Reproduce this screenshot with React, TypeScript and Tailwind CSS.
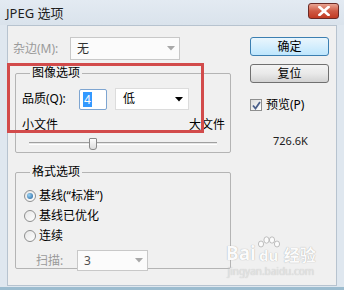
import React from "react";

const F = { fontFamily: '"Noto Sans", "Noto Sans CJK SC", sans-serif' };

function Arrow({ color = "#000" }: { color?: string }) {
  return (
    <svg width="8" height="5" viewBox="0 0 8 5">
      <path d="M0 0 L8 0 L4 4.5 Z" fill={color} />
    </svg>
  );
}

function Radio({ checked }: { checked?: boolean }) {
  return (
    <div className="w-[12px] h-[12px] rounded-full border border-[#8e8f8f] bg-gradient-to-br from-[#e6e6e6] to-[#ffffff] flex items-center justify-center shrink-0">
      {checked && (
        <div className="w-[6px] h-[6px] rounded-full bg-[radial-gradient(circle_at_35%_35%,#9ad3f5,#1f5f9a)]" />
      )}
    </div>
  );
}

export default function App() {
  return (
    <div className="relative w-[344px] h-[290px] overflow-hidden bg-[#dfe7ef] text-[12px] text-black" style={F}>
      {/* title bar */}
      <div className="h-[25px] flex items-center justify-between bg-gradient-to-b from-[#e3eaf2] to-[#dae3ec]">
        <div className="pl-[6px] text-[13px] text-[#1e1e1e] leading-none pt-[1px]">JPEG 选项</div>
        <div className="mr-[5px] mt-[-4px] w-[31px] h-[16px] rounded-[3px] border border-[#6b2a25] bg-gradient-to-b from-[#e8a493] via-[#cf5a44] to-[#c23a22] flex items-center justify-center">
          <svg width="12" height="10" viewBox="0 0 12 10">
            <path d="M1.5 1 L10.5 9 M10.5 1 L1.5 9" stroke="#fff" strokeWidth="2.6" strokeLinecap="square" />
          </svg>
        </div>
      </div>

      {/* client area */}
      <div className="mx-[7px] h-[261px] bg-[#f0f0f0] border border-[#b7c3cf] flex">
        {/* left column */}
        <div className="w-[236px] flex flex-col">
          {/* 杂边 row */}
          <div className="mt-[11px] ml-[5px] h-[23px] flex items-center">
            <div className="w-[57px] text-[#9a9a9a]">杂边(M):</div>
            <div className="w-[110px] h-[23px] border border-[#c8c8c8] bg-[#fbfbfb] flex items-center justify-between pl-[6px] pr-[4px]">
              <span className="text-[#303030]">无</span>
              <Arrow color="#a8a8a8" />
            </div>
          </div>

          {/* group 1 */}
          <div className="relative mt-[13px] ml-[7px] w-[216px] h-[80px] border border-[#b4b4b4] rounded-[2px]">
            <div className="absolute left-[14px] top-[-9px] px-[2px] bg-[#f0f0f0] leading-[16px]">图像选项</div>
            <div className="mt-[14px] ml-[6px] flex items-center h-[22px]">
              <div className="w-[57px]">品质(Q):</div>
              <div className="w-[28px] h-[21px] border border-[#7ea5d1] rounded-[2px] bg-white flex items-center pl-[3px]">
                <span className="bg-[#3399ff] text-white px-[1px] leading-[15px]">4</span>
              </div>
              <div className="ml-[8px] w-[74px] h-[22px] border border-[#dcdcdc] bg-white flex items-center justify-between pl-[7px] pr-[5px]">
                <span>低</span>
                <Arrow />
              </div>
            </div>
            <div className="mt-[7px] ml-[6px] mr-[5px] flex justify-between leading-[16px]">
              <span>小文件</span>
              <span>大文件</span>
            </div>
            <div className="relative mt-[5px] ml-[13px] w-[188px] h-[12px]">
              <div className="absolute left-0 right-0 top-[4px] h-[3px] border-t border-[#a0a0a0] border-b border-b-white bg-[#e7e7e7]" />
              <div className="absolute left-[60px] top-0 w-[8px] h-[12px] rounded-b-[3px] rounded-t-[1px] border border-[#8a8a8a] bg-gradient-to-b from-[#fdfdfd] to-[#dcdcdc]" />
            </div>
          </div>

          {/* group 2 */}
          <div className="relative mt-[19px] ml-[7px] w-[216px] h-[97px] border border-[#b4b4b4] rounded-[2px]">
            <div className="absolute left-[14px] top-[-9px] px-[2px] bg-[#f0f0f0] leading-[16px]">格式选项</div>
            <div className="mt-[13px] ml-[8px] flex flex-col">
              <div className="h-[20px] flex items-center gap-[3px]">
                <Radio checked />
                <span>基线(“标准”)</span>
              </div>
              <div className="h-[20px] flex items-center gap-[3px]">
                <Radio />
                <span>基线已优化</span>
              </div>
              <div className="h-[20px] flex items-center gap-[3px]">
                <Radio />
                <span>连续</span>
              </div>
            </div>
            <div className="mt-[4px] ml-[20px] h-[21px] flex items-center">
              <div className="w-[41px] text-[#9a9a9a]">扫描:</div>
              <div className="w-[71px] h-[21px] border border-[#c8c8c8] bg-[#fbfbfb] flex items-center justify-between pl-[6px] pr-[4px]">
                <span className="text-[#505050]">3</span>
                <Arrow color="#a8a8a8" />
              </div>
            </div>
          </div>
        </div>

        {/* right column */}
        <div className="flex flex-col ml-[6px]">
          <div className="mt-[11px] w-[79px] h-[19px] rounded-[3px] border border-[#3c7fb1] bg-gradient-to-b from-[#eaf6fd] to-[#bee6fd] flex items-center justify-center leading-none">确定</div>
          <div className="mt-[8px] w-[79px] h-[19px] rounded-[3px] border border-[#707070] bg-gradient-to-b from-[#f4f4f4] via-[#e9e9e9] to-[#d3d3d3] flex items-center justify-center leading-none">复位</div>
          <div className="mt-[15px] flex items-center gap-[4px] h-[14px]">
            <div className="w-[12px] h-[12px] border border-[#8e8f8f] bg-gradient-to-br from-[#dcdcdc] to-[#ffffff] flex items-center justify-center">
              <svg width="9" height="9" viewBox="0 0 9 9">
                <path d="M1 4.5 L3.5 7.5 L8 1" stroke="#4a5f8a" strokeWidth="1.8" fill="none" />
              </svg>
            </div>
            <span>预览(P)</span>
          </div>
          <div className="mt-[23px] ml-[23px] text-[11px] leading-none text-[#202020]">726.6K</div>
        </div>
      </div>

      {/* bottom frame edge */}
      <div className="absolute left-0 right-0 bottom-0 h-[3px] bg-[#9cbccf]" />

      {/* red annotation */}
      <div className="absolute left-[7px] top-[63px] w-[197px] h-[70px] border-[3px] border-[#d24b4b]" />

      {/* watermark */}
      <div className="absolute left-[226px] top-[236px] flex flex-col items-center leading-none">
        <div className="flex items-end text-[#fbfbfb] font-bold [text-shadow:0_0_1px_#9a9a9a]">
          <span className="text-[19px]">Bai</span>
          <div className="relative ml-[1px] flex flex-col items-center">
            <svg width="24" height="12" viewBox="0 0 24 12">
              <g fill="#fbfbfb" stroke="#b0b0b0" strokeWidth="0.8">
                <ellipse cx="4" cy="8" rx="2.6" ry="3" />
                <ellipse cx="9.5" cy="4" rx="2.6" ry="3.2" />
                <ellipse cx="15" cy="4" rx="2.6" ry="3.2" />
                <ellipse cx="20" cy="8" rx="2.6" ry="3" />
              </g>
            </svg>
            <span className="text-[15px]">du</span>
          </div>
          <span className="text-[16px] ml-[3px]">经验</span>
        </div>
        <div className="text-[10px] mt-[3px] text-[#e4e4e4] [text-shadow:0_0_1px_#bbbbbb]">jingyan.baidu.com</div>
      </div>
    </div>
  );
}
